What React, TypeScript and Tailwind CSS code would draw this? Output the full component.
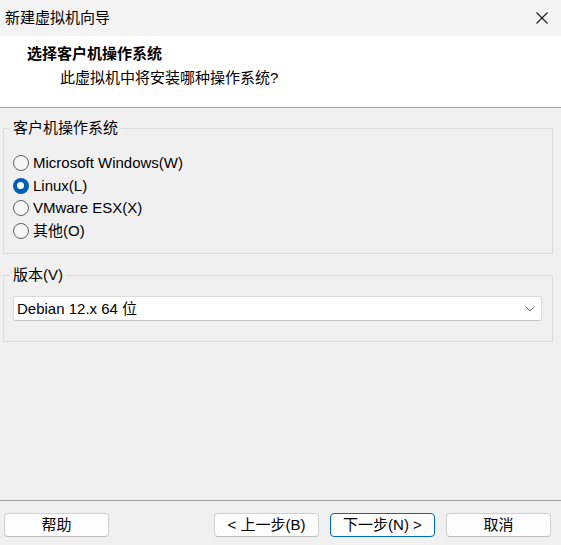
export default function App() {
  return (
    <div className="w-[561px] h-[545px] flex flex-col bg-[#f0f0f0] text-black text-[15px] leading-[20px] font-['Liberation_Sans','Noto_Sans_CJK_SC',sans-serif] overflow-hidden">
      {/* title bar */}
      <div className="h-[36px] flex items-center justify-between bg-[#f3f3f3] pl-[5px] pr-[13px] shrink-0">
        <span>新建虚拟机向导</span>
        <svg width="12" height="12" viewBox="0 0 12 12">
          <path d="M0.5 0.5 L11.5 11.5 M11.5 0.5 L0.5 11.5" stroke="#1a1a1a" strokeWidth="1.1" />
        </svg>
      </div>
      {/* header */}
      <div className="h-[72px] bg-white border-b border-[#a0a0a0] shrink-0 flex flex-col">
        <div className="pl-[27px] pt-[8px] font-bold">选择客户机操作系统</div>
        <div className="pl-[60px] mt-[4px]">此虚拟机中将安装哪种操作系统?</div>
      </div>
      {/* body */}
      <div className="flex-1 flex flex-col">
        <fieldset className="ml-[3px] mt-[10px] w-[550px] border border-[#dcdcdc] p-0 min-w-0">
          <legend className="ml-[6px] px-[3px] leading-[20px]">客户机操作系统</legend>
          <div className="pl-[8.5px] pt-[14px] pb-[11px] flex flex-col">
            <Radio label="Microsoft Windows(W)" />
            <Radio label="Linux(L)" checked />
            <Radio label="VMware ESX(X)" />
            <Radio label="其他(O)" />
          </div>
        </fieldset>
        <fieldset className="ml-[3px] mt-[11px] w-[550px] border border-[#dcdcdc] p-0 min-w-0">
          <legend className="ml-[6px] px-[3px] leading-[20px]">版本(V)</legend>
          <div className="pl-[9px] pr-[10px] pt-[11px] pb-[20px]">
            <div className="h-[25px] bg-white border border-[#dadada] border-b-[#c4c4c4] rounded-[3px] flex items-center justify-between pl-[3px] pr-[6px]">
              <span>Debian 12.x 64 位</span>
              <svg width="10" height="6" viewBox="0 0 10 6">
                <path d="M0.5 0.5 L5 5 L9.5 0.5" fill="none" stroke="#6a6a6a" strokeWidth="1" />
              </svg>
            </div>
          </div>
        </fieldset>
      </div>
      {/* footer */}
      <div className="h-[45px] shrink-0 border-t border-[#a0a0a0] flex items-start pt-[12px] pr-[10px] pl-[4px]">
        <Btn label="帮助" />
        <div className="flex-1" />
        <div className="flex gap-[11px]">
          <Btn label="< 上一步(B)" />
          <Btn label="下一步(N) >" primary />
          <Btn label="取消" />
        </div>
      </div>
    </div>
  );
}

function Radio({ label, checked }: { label: string; checked?: boolean }) {
  return (
    <div className="flex items-center h-[22.5px]">
      {checked ? (
        <span className="w-[16px] h-[16px] rounded-full bg-[#005fb8] flex items-center justify-center shrink-0">
          <span className="w-[7px] h-[7px] rounded-full bg-white" />
        </span>
      ) : (
        <span className="w-[16px] h-[16px] rounded-full border border-[#616161] bg-[#f6f6f6] shrink-0" />
      )}
      <span className="ml-[4.5px]">{label}</span>
    </div>
  );
}

function Btn({ label, primary }: { label: string; primary?: boolean }) {
  return (
    <div
      className={
        primary
          ? "w-[105px] h-[24px] flex items-center justify-center rounded-[4px] bg-[#fdfdfd] border border-[#0067c0]"
          : "w-[105px] h-[24px] flex items-center justify-center rounded-[4px] bg-[#fdfdfd] border border-[#d0d0d0] border-b-[#bdbdbd]"
      }
    >
      {label}
    </div>
  );
}
